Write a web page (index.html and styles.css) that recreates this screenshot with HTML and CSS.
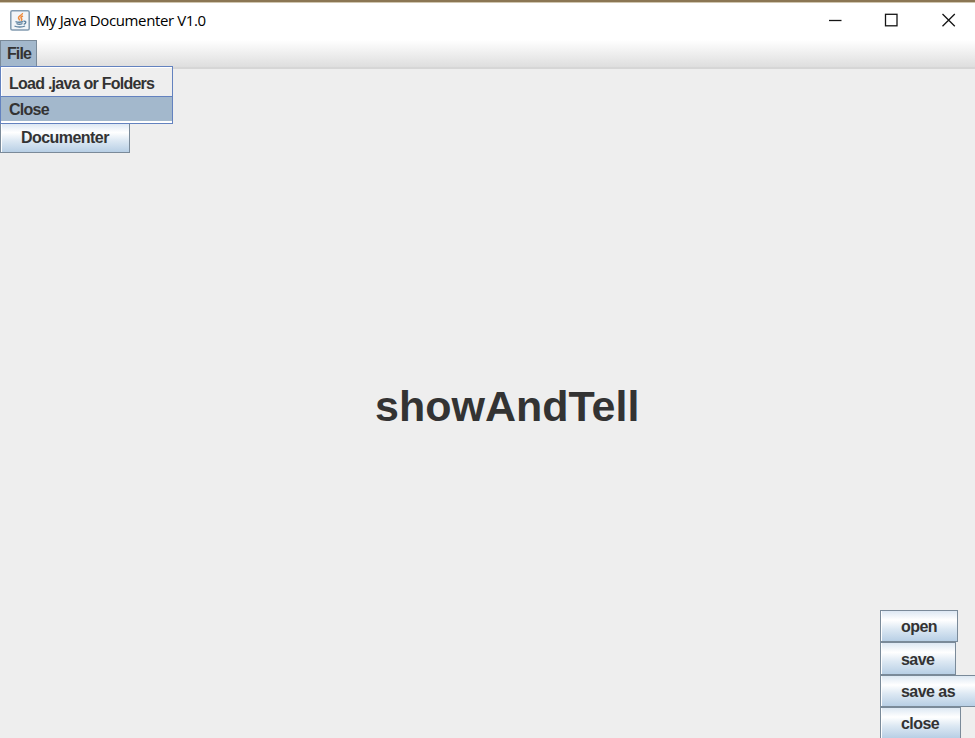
FILE: index.html
```html
<!DOCTYPE html>
<html lang="en">
<head>
<meta charset="utf-8">
<title>My Java Documenter V1.0</title>
<link rel="stylesheet" href="styles.css">
</head>
<body>
<div class="window">
  <header class="titlebar">
    <svg class="app-icon" width="20" height="21" viewBox="0 0 20 21" fill="none">
      <rect x=".8" y=".8" width="18.4" height="19.2" rx="1.5" fill="#f1f5f8" stroke="#829bb0" stroke-width="1.5"/>
      <path d="M12.5 3c.5 2-4 2.700-4 4.700 0 1.300 1.200 1.500 1 2.800M13 6c-2 .8-2.700 1.600-1.500 2.600.7.700.1 1.500-.5 2" stroke="#ed8b3d" stroke-width="1.500"/>
      <path d="M5.500 11.500c1.500 1 5.500 1 7.500 0M6.500 13.500c1.500.8 4.500.8 6 0M4.500 16c2.500 1.400 8 1.300 10.500 0M13.500 11.300c3-.6 3 2.200.2 3" stroke="#5f839f" stroke-width="1.400"/>
    </svg>
    <h1 class="title">My Java Documenter V1.0</h1>
    <svg class="controls" width="130" height="16" viewBox="0 0 130 16" fill="none" stroke="#151515" stroke-width="1.300">
      <path d="M0 8.500h12.500"/>
      <rect x="56.500" y="2.300" width="11.500" height="11.500"/>
      <path d="M113.500 2l12.300 12.300M125.800 2l-12.300 12.300"/>
    </svg>
  </header>
  <nav class="menubar">
    <div class="menu"><span class="file">File</span>
      <div class="popup">
        <div class="item">Load .java or Folders</div>
        <div class="item selected">Close</div>
      </div>
    </div>
  </nav>
  <main class="content">
    <button class="btn documenter">Documenter</button>
    <h2 class="heading">showAndTell</h2>
    <div class="actions">
      <button class="btn open">open</button>
      <button class="btn save">save</button>
      <button class="btn save-as">save as</button>
      <button class="btn close">close</button>
    </div>
  </main>
</div>
</body>
</html>
```
FILE: styles.css
```css
* { box-sizing: border-box; }
body { margin: 0; overflow: hidden; background: #eee; color: #333; font-family: "Liberation Sans", sans-serif; }
.window { width: 975px; height: 738px; display: flex; flex-direction: column; overflow: hidden; }
.titlebar { height: 40px; flex: none; display: flex; align-items: center; background: #fff; border-top: 2px solid #8b7654; box-shadow: inset 0 1px #d0c6b0; padding: 0 16px 2px 10px; }
.app-icon { flex: none; }
.title { margin: 0 0 0 6px; font: 400 15px/20px "Open Sans", sans-serif; letter-spacing: -.39px; color: #000; white-space: nowrap; }
.controls { margin-left: auto; }
.menubar { height: 29px; flex: none; background: linear-gradient(#fff, #dedede); border-bottom: 2px solid #d6d6d6; }
.menu { position: relative; width: 37px; height: 27px; padding: 4px 0 0 6px; background: #a3b8cc; border: 1px solid #7a8a99; border-bottom: 0; font: bold 16px/17px "Liberation Sans", sans-serif; }
.file { display: block; letter-spacing: -.9px; }
.popup { position: absolute; z-index: 2; left: -1px; top: 25px; width: 173px; height: 58px; border: 1px solid #6382bf; background: #eee; box-shadow: inset 1px 1px #fff, inset 0 -2px #fff; white-space: nowrap; }
.item { height: 29px; padding: 8px 8px 0; letter-spacing: -.75px; }
.item.selected { height: 25px; padding-top: 4px; background: #a3b8cc; border-top: 1px solid #6382bf; }
.content { flex: 1; display: grid; grid-template-rows: 84px 1fr auto; min-height: 0; }
.btn { display: block; padding: 0 0 0 20px; border: 1px solid #7a8a99; box-shadow: inset 1px 0 #fff; background: linear-gradient(#dde8f3 0%, #fff 30%, #dce8f3 60%, #b8cfe5 100%); font: bold 16px/29px "Liberation Sans", sans-serif; letter-spacing: -.55px; color: #333; text-align: left; white-space: nowrap; }
.documenter { align-self: end; width: 130px; height: 30px; line-height: 28px; }
.heading { margin: 0; padding: 228px 0 0 375px; font: bold 43px/50px "Liberation Sans", sans-serif; white-space: nowrap; }
.actions { display: flex; flex-direction: column; margin: 0 0 -1.300px 880px; }
.actions .btn { height: 32.300px; flex: none; padding-top: 1px; }
.open { width: 78px; }
.save { width: 76px; }
.save-as { width: 110px; }
.close { width: 81px; }
```
